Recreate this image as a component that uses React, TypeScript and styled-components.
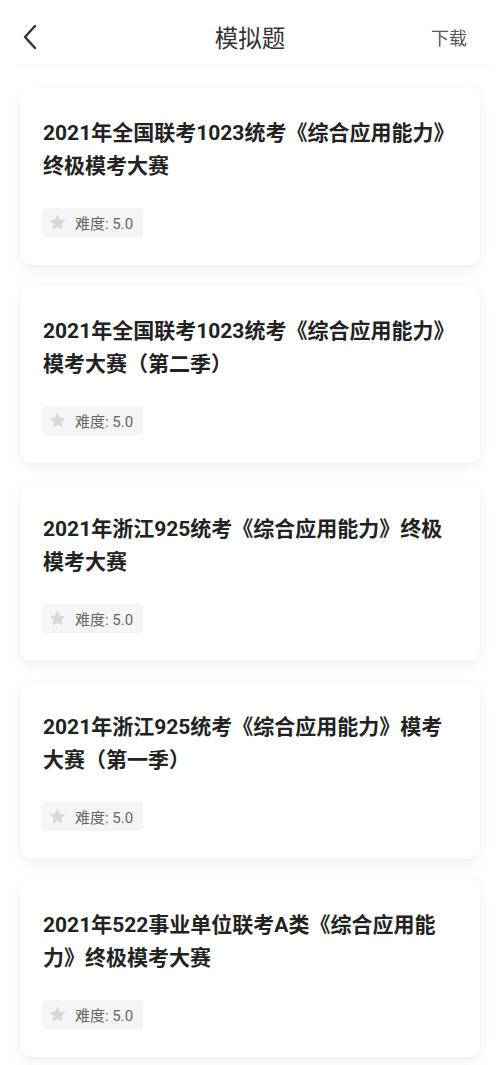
import * as React from 'react';
import styled, { createGlobalStyle } from 'styled-components';

const GlobalStyle = createGlobalStyle`
    html, body {
        margin: 0;
        padding: 0;
        background: #ffffff;
    }
    body {
        font-family: Roboto, "Noto Sans CJK SC", sans-serif;
        -webkit-font-smoothing: antialiased;
    }
`;

const Page = styled.div`
    width: 500px;
    min-height: 1065px;
    background: #ffffff;
`;

const Header = styled.header`
    height: 64px;
    padding: 0 20px;
    display: grid;
    grid-template-columns: 1fr auto 1fr;
    align-items: center;
    box-shadow: 0 6px 10px -8px rgba(0, 0, 0, 0.06);
    margin-bottom: 23px;
`;

const BackButton = styled.button`
    width: 20px;
    height: 30px;
    padding: 0;
    border: none;
    background: none;
    display: flex;
    align-items: center;
    justify-content: center;
    margin-top: 10px;
`;

const Title = styled.h1`
    margin: 10px 0 0;
    text-align: center;
    font-size: 23.5px;
    font-weight: 400;
    color: #333333;
    font-family: "Noto Sans CJK SC", sans-serif;
`;

const Download = styled.span`
    margin: 10px 13px 0 0;
    justify-self: end;
    font-size: 18px;
    color: #555555;
    font-family: "Noto Sans CJK SC", sans-serif;
`;

const List = styled.div`
    display: flex;
    flex-direction: column;
    gap: 20px;
    padding: 0 20px 20px;
`;

const Card = styled.div`
    background: #ffffff;
    border-radius: 10px;
    padding: 30px 27px 28px 22px;
    box-shadow: 0 6px 14px rgba(0, 0, 0, 0.05), 0 0 5px rgba(0, 0, 0, 0.04);
`;

const CardTitle = styled.div`
    font-size: 21px;
    line-height: 33px;
    font-weight: 700;
    color: #222222;
    margin: 0 0 0 1px;
`;

const Tag = styled.div`
    margin-top: 25px;
    display: inline-flex;
    align-items: center;
    gap: 9px;
    height: 29px;
    padding: 0 10px 0 7px;
    border-radius: 4px;
    background: #f4f5f7;
    font-size: 15px;
    color: #666666;
`;

const items = [
    '2021年全国联考1023统考《综合应用能力》终极模考大赛',
    '2021年全国联考1023统考《综合应用能力》模考大赛（第二季）',
    '2021年浙江925统考《综合应用能力》终极模考大赛',
    '2021年浙江925统考《综合应用能力》模考大赛（第一季）',
    '2021年522事业单位联考A类《综合应用能力》终极模考大赛',
];

const Star = () => (
    <svg width="17" height="17" viewBox="0 0 24 24">
        <path
            d="M12 2.5l2.9 6.1 6.6.8-4.9 4.6 1.3 6.6L12 17.3l-5.9 3.3 1.3-6.6-4.9-4.6 6.6-.8z"
            fill="#d6d8dc"
            stroke="#d6d8dc"
            strokeWidth="1.5"
            strokeLinejoin="round"
        />
    </svg>
);

const App: React.FC = () => (
    <Page>
        <GlobalStyle />
        <Header>
            <BackButton>
                <svg width="16" height="26" viewBox="0 0 16 26">
                    <path d="M13 2L3 13l10 11" fill="none" stroke="#333" strokeWidth="2.4" strokeLinecap="round" strokeLinejoin="round" />
                </svg>
            </BackButton>
            <Title>模拟题</Title>
            <Download>下载</Download>
        </Header>
        <List>
            {items.map(text => (
                <Card key={text}>
                    <CardTitle>{text}</CardTitle>
                    <Tag>
                        <Star />
                        <span>难度: 5.0</span>
                    </Tag>
                </Card>
            ))}
        </List>
    </Page>
);

export default App;
